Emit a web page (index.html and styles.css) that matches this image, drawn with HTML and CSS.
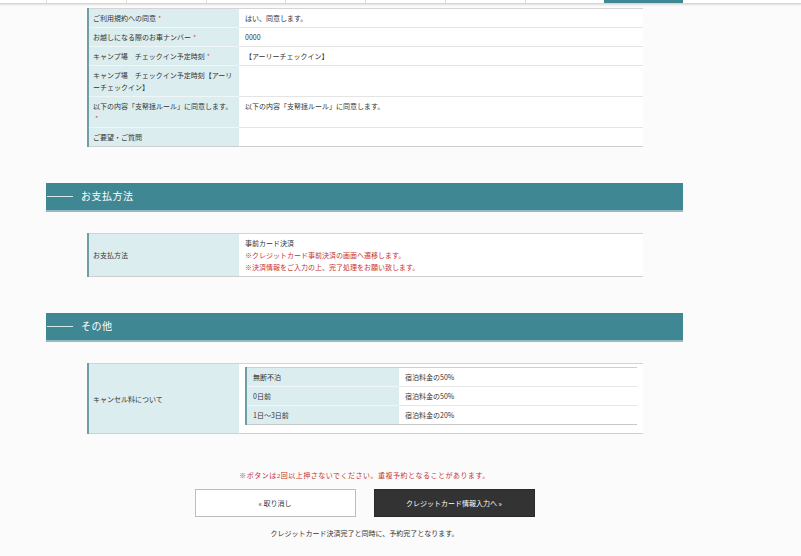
FILE: index.html
```html
<!DOCTYPE html>
<html lang="ja">
<head>
  <meta charset="UTF-8" />
  <meta name="viewport" content="width=device-width, initial-scale=1.0"/>
  <title>ご予約内容の確認</title>
  <link rel="stylesheet" href="styles.css">
</head>
<body>

  <nav class="tabs">
    <div class="tab-row">
      <span class="tab"></span>
      <span class="tab"></span>
      <span class="tab"></span>
      <span class="tab"></span>
      <span class="tab"></span>
      <span class="tab"></span>
      <span class="tab"></span>
      <span class="tab current"></span>
    </div>
  </nav>

  <main class="page">
    <table class="form-table first">
      <tr><th>ご利用規約への同意<span class="req">*</span></th><td>はい、同意します。</td></tr>
      <tr><th>お越しになる際のお車ナンバー<span class="req">*</span></th><td>0000</td></tr>
      <tr><th>キャンプ場　チェックイン予定時刻<span class="req">*</span></th><td>【アーリーチェックイン】</td></tr>
      <tr><th>キャンプ場　チェックイン予定時刻【アーリーチェックイン】</th><td></td></tr>
      <tr><th>以下の内容「支帑拯ルール」に同意します。<span class="req">*</span></th><td>以下の内容「支帑拯ルール」に同意します。</td></tr>
      <tr><th>ご要望・ご質問</th><td></td></tr>
    </table>

    <h2 class="section-title">お支払方法</h2>
    <table class="form-table">
      <tr>
        <th>お支払方法</th>
        <td>事前カード決済<br>
          <span class="red">※クレジットカード事前決済の画面へ遷移します。</span><br>
          <span class="red">※決済情報をご入力の上、完了処理をお願い致します。</span>
        </td>
      </tr>
    </table>

    <h2 class="section-title">その他</h2>
    <table class="form-table">
      <tr>
        <th>キャンセル料について</th>
        <td class="has-inner">
          <table class="fee-table">
            <tr><th>無断不泊</th><td>宿泊料金の50%</td></tr>
            <tr><th>0日前</th><td>宿泊料金の50%</td></tr>
            <tr><th>1日〜3日前</th><td>宿泊料金の20%</td></tr>
          </table>
        </td>
      </tr>
    </table>

    <p class="warning">※ボタンは2回以上押さないでください。重複予約となることがあります。</p>
    <div class="buttons">
      <button class="btn btn-cancel">« 取り消し</button>
      <button class="btn btn-next">クレジットカード情報入力へ »</button>
    </div>
    <p class="note">クレジットカード決済完了と同時に、予約完了となります。</p>
  </main>

</body>
</html>
```

FILE: styles.css
```css
body {
  margin: 0;
  background: #fbfbfb;
  color: #333;
  font-family: "Noto Sans CJK JP", "Noto Sans", sans-serif;
  font-size: 7px;
  line-height: 12px;
}
.tabs {
  background: #fff;
  border-bottom: 1px solid #d6d6d6;
  box-shadow: 0 1px 2px rgba(0,0,0,0.12);
}
.tab-row {
  display: flex;
  width: 637px;
  margin-left: 46px;
  height: 3px;
}
.tab {
  flex: 1;
  border-left: 1px solid #ddd;
}
.tab.current {
  background: #3f8792;
  border-left: none;
}
.page {
  width: 637px;
  margin-left: 46px;
  padding-top: 4px;
}
.form-table {
  width: 556px;
  margin-left: 41px;
  border-collapse: collapse;
  border-top: 1px solid #d4d4d4;
  border-bottom: 1px solid #cfcfcf;
}
.form-table > tbody > tr > th,
.form-table > tbody > tr > td {
  padding: 3px 6px;
  border-top: 1px solid #e4e4e4;
  text-align: left;
  vertical-align: top;
  font-weight: normal;
}
.form-table > tbody > tr > th {
  width: 140px;
  padding-left: 4px;
  vertical-align: middle;
  background: #dcedf0;
  border-left: 2px solid #6f9ea6;
  border-top-color: #eef6f7;
}
.form-table > tbody > tr:first-child > th,
.form-table > tbody > tr:first-child > td {
  border-top: none;
}
.form-table td {
  background: #fff;
}
.req {
  color: #d24a6a;
  margin-left: 2px;
}
.red {
  color: #c8332f;
}
.section-title {
  display: flex;
  align-items: center;
  height: 27px;
  margin: 36px 0 21px;
  background: #3f8792;
  border-bottom: 2px solid #93bcc2;
  color: #fff;
  font-family: "Liberation Serif", "Noto Sans CJK JP", serif;
  font-size: 10px;
  font-weight: normal;
  letter-spacing: 0.5px;
}
.section-title::before {
  content: "";
  width: 26px;
  height: 1px;
  margin: 0 8px 0 1px;
  background: #d6e8ea;
}
.has-inner {
  padding: 3px 6px 8px !important;
}
.fee-table {
  width: 100%;
  border-collapse: collapse;
  border-top: 1px solid #cfcfcf;
  border-bottom: 1px solid #c8c8c8;
}
.fee-table th,
.fee-table td {
  padding: 3px 6px;
  border-top: 1px solid #e6e6e6;
  text-align: left;
  font-weight: normal;
}
.fee-table th {
  width: 140px;
  background: #dcedf0;
  border-left: 2px solid #6f9ea6;
  border-top-color: #f0f7f8;
}
.fee-table tr:first-child th,
.fee-table tr:first-child td {
  border-top: none;
}
.warning {
  margin: 36px 0 7px;
  text-align: center;
  color: #c8332f;
  font-family: "Liberation Serif", "Noto Sans CJK JP", serif;
  letter-spacing: 0.5px;
}
.buttons {
  display: flex;
  justify-content: center;
  gap: 18px;
}
.btn {
  width: 161px;
  height: 28px;
  font-family: inherit;
  font-size: 7px;
  cursor: pointer;
}
.btn-cancel {
  background: #fff;
  color: #333;
  border: 1px solid #bdbdbd;
}
.btn-next {
  background: #333;
  color: #fff;
  border: 1px solid #2a2a2a;
}
.note {
  margin: 10px 0 0;
  text-align: center;
}
```
